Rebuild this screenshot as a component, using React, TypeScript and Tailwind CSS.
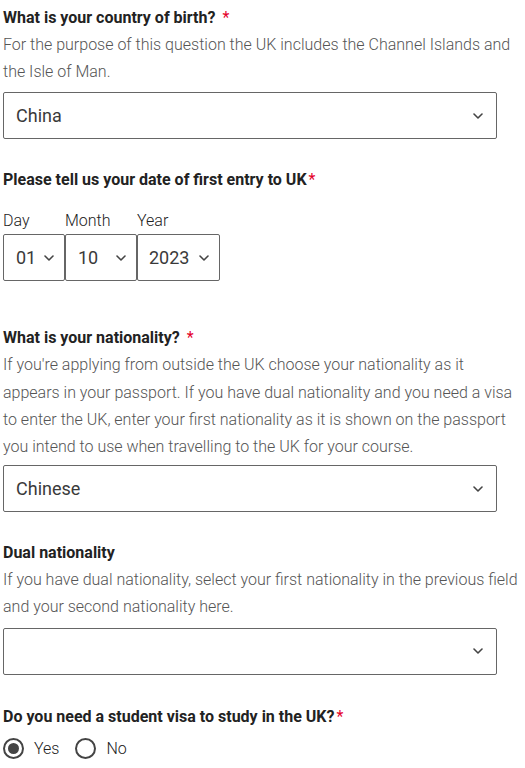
import React from "react";

const font = { fontFamily: "Roboto, 'Noto Sans', Arial, sans-serif" };

function Chevron({ className = "" }: { className?: string }) {
  return (
    <svg
      className={`pointer-events-none absolute top-1/2 -translate-y-1/2 ${className}`}
      width="10"
      height="6"
      viewBox="0 0 10 6"
      fill="none"
    >
      <path d="M1 1l4 4 4-4" stroke="#444" strokeWidth="1.6" strokeLinecap="round" strokeLinejoin="round" />
    </svg>
  );
}

function Heading({ children, star = true, gap = true }: { children: React.ReactNode; star?: boolean; gap?: boolean }) {
  return (
    <div className="text-[16px] leading-[26px] font-bold text-[#222]">
      {children}
      {star && <span className={`text-[#e4002b] font-normal ${gap ? "ml-[7px]" : "ml-[2px]"}`}>*</span>}
    </div>
  );
}

function Help({ children }: { children: React.ReactNode }) {
  return <p className="text-[16px] leading-[1.7] font-light text-[#555]">{children}</p>;
}

function BigSelect({ value, className = "" }: { value: string; className?: string }) {
  return (
    <div className={`relative w-[494px] h-[47px] ${className}`}>
      <select
        defaultValue={value}
        className="w-full h-full appearance-none bg-white border border-[#666] rounded-[2px] pl-[12px] text-[18px] text-[#3a3a3a] outline-none"
        style={font}
      >
        <option value={value}>{value}</option>
      </select>
      <Chevron className="right-[14px]" />
    </div>
  );
}

function SmallSelect({ label, value, width, pad }: { label: string; value: string; width: string; pad: string }) {
  return (
    <div className="flex flex-col">
      <span className="text-[16px] leading-[24px] font-light text-[#222] mb-[1px]">{label}</span>
      <div className={`relative h-[47px] ${width}`}>
        <select
          defaultValue={value}
          className={`w-full h-full appearance-none bg-white border border-[#666] rounded-[2px] ${pad} text-[18px] text-[#3a3a3a] outline-none`}
          style={font}
        >
          <option value={value}>{value}</option>
        </select>
        <Chevron className="right-[11px]" />
      </div>
    </div>
  );
}

function Radio({ label, checked }: { label: string; checked?: boolean }) {
  return (
    <label className="flex items-center gap-[10px]">
      <span className="w-[21px] h-[21px] rounded-full border-2 border-[#444] flex items-center justify-center">
        {checked && <span className="w-[11px] h-[11px] rounded-full bg-[#444]" />}
      </span>
      <span className="text-[16px] font-light text-[#222]">{label}</span>
    </label>
  );
}

export default function App() {
  return (
    <div className="bg-white min-h-screen pl-[3px] pt-[5px]" style={font}>
      <Heading>What is your country of birth?</Heading>
      <Help>
        For the purpose of this question the UK includes the Channel Islands and
        <br />
        the Isle of Man.
      </Help>
      <BigSelect value="China" className="mt-[7px]" />

      <div className="mt-[28px]">
        <Heading gap={false}>Please tell us your date of first entry to UK</Heading>
      </div>
      <div className="flex mt-[16px]">
        <SmallSelect label="Day" value="01" width="w-[62px]" pad="pl-[12px]" />
        <SmallSelect label="Month" value="10" width="w-[72px]" pad="pl-[12px]" />
        <SmallSelect label="Year" value="2023" width="w-[83px]" pad="pl-[11px]" />
      </div>

      <div className="mt-[44px]">
        <Heading>What is your nationality?</Heading>
      </div>
      <Help>
        If you're applying from outside the UK choose your nationality as it
        <br />
        appears in your passport. If you have dual nationality and you need a visa
        <br />
        to enter the UK, enter your first nationality as it is shown on the passport
        <br />
        you intend to use when travelling to the UK for your course.
      </Help>
      <BigSelect value="Chinese" className="mt-[5px]" />

      <div className="mt-[28px]">
        <Heading star={false}>Dual nationality</Heading>
      </div>
      <Help>
        If you have dual nationality, select your first nationality in the previous field
        <br />
        and your second nationality here.
      </Help>
      <BigSelect value="" className="mt-[7px]" />

      <div className="mt-[29px]">
        <Heading gap={false}>Do you need a student visa to study in the UK?</Heading>
      </div>
      <div className="flex items-center gap-[16px] mt-[7px]">
        <Radio label="Yes" checked />
        <Radio label="No" />
      </div>
    </div>
  );
}
